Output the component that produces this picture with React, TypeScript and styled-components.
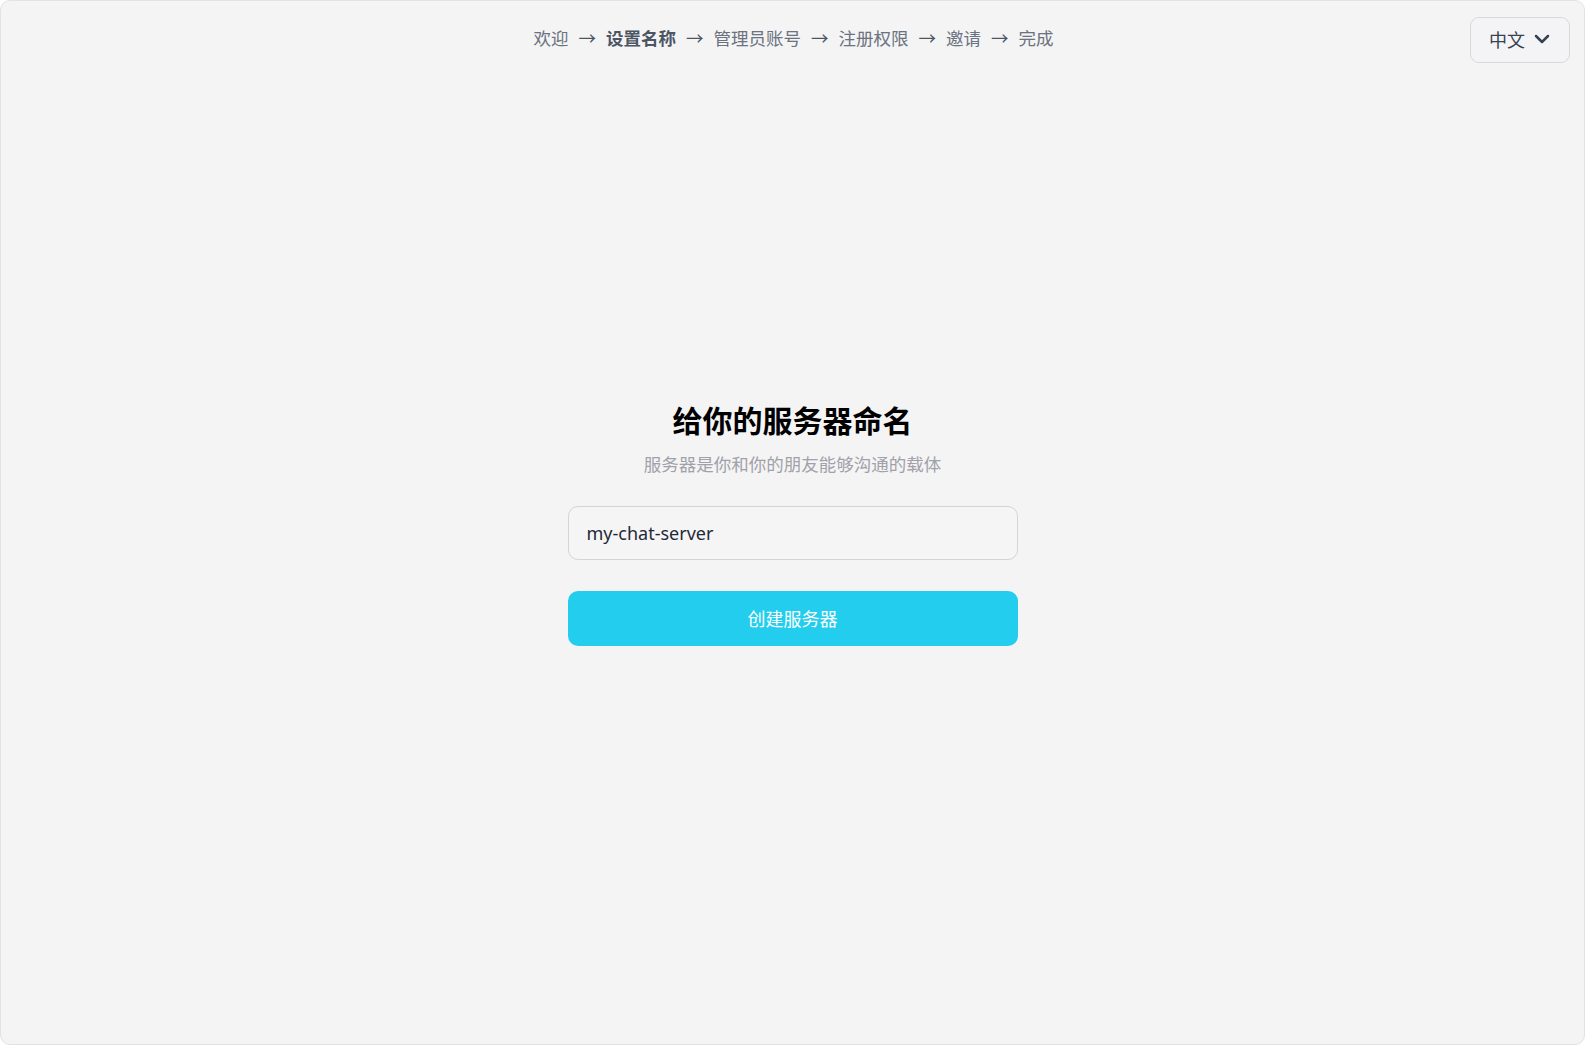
import React from "react";
import styled, { createGlobalStyle } from "styled-components";
import { ChevronDown } from "lucide-react";

const GlobalStyle = createGlobalStyle`
  html, body {
    margin: 0;
    padding: 0;
    background: #ffffff;
  }
  body {
    font-family: "Noto Sans", "Noto Sans CJK SC", sans-serif;
  }
  * {
    box-sizing: border-box;
  }
`;

const Window = styled.div`
  height: 100vh;
  display: grid;
  grid-template-rows: 78px 1fr 78px;
  background: #f4f4f4;
  border: 1px solid #e2e2e2;
  border-radius: 10px;
`;

const Header = styled.header`
  display: grid;
  grid-template-columns: 1fr auto 1fr;
  align-items: center;
  padding: 0 14px 0 16px;
`;

const Steps = styled.nav`
  grid-column: 2;
  display: flex;
  align-items: center;
  gap: 10px;
  margin-bottom: 4px;
  font-family: "Noto Sans CJK SC", sans-serif;
  font-size: 17.5px;
  line-height: 24px;
`;

const Step = styled.span<{ $active?: boolean }>`
  color: ${(p) => (p.$active ? "#4b5563" : "#6b7280")};
  font-weight: ${(p) => (p.$active ? 700 : 400)};
`;

const Arrow = styled.span`
  color: #4b5563;
  font-family: "Noto Sans CJK SC", sans-serif;
`;

const LangButton = styled.button`
  grid-column: 3;
  justify-self: end;
  display: flex;
  align-items: center;
  gap: 5px;
  height: 46px;
  padding: 0 15px 3px 18px;
  background: #f4f4f6;
  border: 1px solid #d6d8de;
  border-radius: 9px;
  color: #374151;
  font-family: "Noto Sans CJK SC", sans-serif;
  font-size: 18px;
  cursor: pointer;
`;

const Main = styled.main`
  display: flex;
  flex-direction: column;
  align-items: center;
  justify-content: center;
  padding-top: 1px;
`;

const Title = styled.h1`
  margin: 0;
  font-family: "Noto Sans CJK SC", sans-serif;
  font-size: 30px;
  line-height: 36px;
  font-weight: 700;
  color: #000000;
`;

const Subtitle = styled.p`
  margin: 14px 0 0;
  font-family: "Noto Sans CJK SC", sans-serif;
  font-size: 17.5px;
  line-height: 25px;
  color: #a1a1aa;
`;

const Form = styled.form`
  width: 450px;
  margin-top: 30px;
  display: flex;
  flex-direction: column;
  gap: 31px;
`;

const NameInput = styled.input`
  width: 100%;
  height: 54px;
  padding: 0 18px;
  background: #f5f5f5;
  border: 1px solid #d4d4d8;
  border-radius: 10px;
  font-family: "Noto Sans", "Noto Sans CJK SC", sans-serif;
  font-size: 18px;
  color: #1f2937;
  outline: none;
`;

const SubmitButton = styled.button`
  width: 100%;
  height: 55px;
  border: none;
  border-radius: 10px;
  background: #22cdee;
  color: #ffffff;
  font-family: "Noto Sans CJK SC", sans-serif;
  font-size: 18px;
  cursor: pointer;
`;

const steps = ["欢迎", "设置名称", "管理员账号", "注册权限", "邀请", "完成"];
const current = 1;

export default function App() {
  return (
    <>
      <GlobalStyle />
      <Window>
        <Header>
          <Steps>
            {steps.map((s, i) => (
              <React.Fragment key={s}>
                {i > 0 && <Arrow>→</Arrow>}
                <Step $active={i === current}>{s}</Step>
              </React.Fragment>
            ))}
          </Steps>
          <LangButton type="button">
            中文
            <ChevronDown size={24} strokeWidth={2.5} />
          </LangButton>
        </Header>
        <Main>
          <Title>给你的服务器命名</Title>
          <Subtitle>服务器是你和你的朋友能够沟通的载体</Subtitle>
          <Form onSubmit={(e) => e.preventDefault()}>
            <NameInput defaultValue="my-chat-server" />
            <SubmitButton type="submit">创建服务器</SubmitButton>
          </Form>
        </Main>
        <div />
      </Window>
    </>
  );
}
